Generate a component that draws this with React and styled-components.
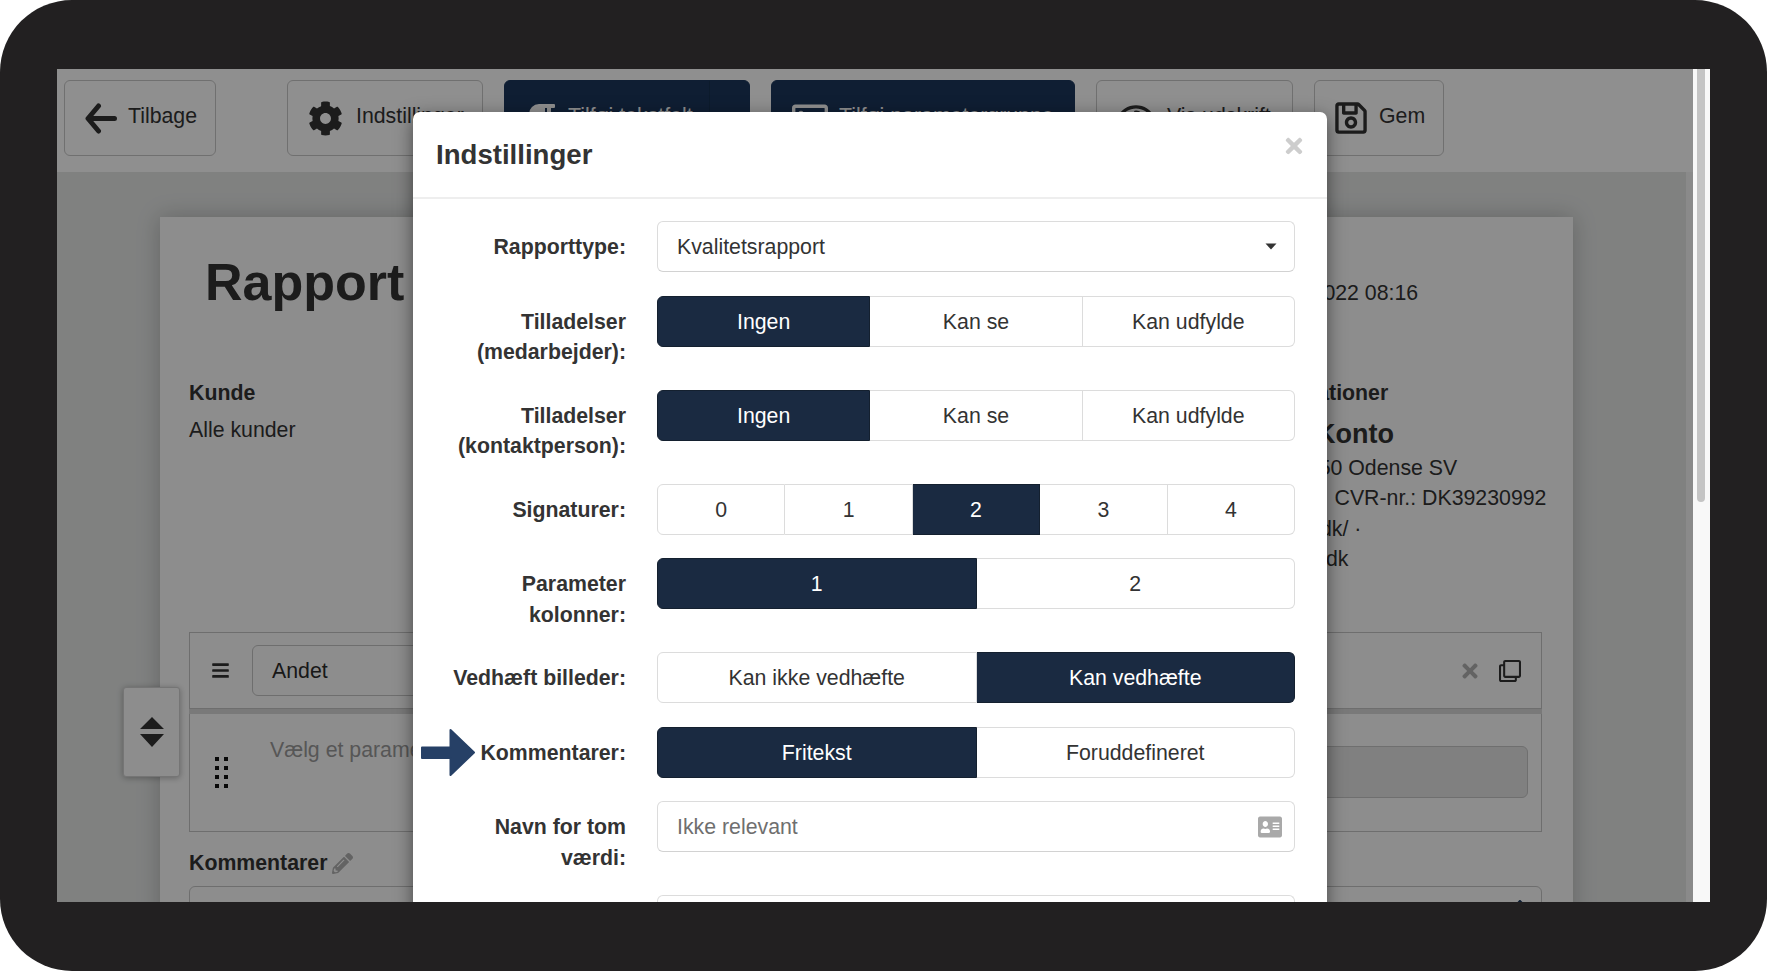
import React from 'react';
import styled, { createGlobalStyle } from 'styled-components';
import {
  FaCog, FaRegSave, FaRegEye, FaParagraph, FaRegImage, FaBars, FaTimes, FaRegClone,
  FaPencilAlt, FaAddressCard, FaEdit,
} from 'react-icons/fa';

const Global = createGlobalStyle`
  html, body { margin: 0; padding: 0; background: #fff; }
  body { font-family: "Liberation Sans", Arial, sans-serif; font-size: 21.3px; line-height: 30.5px; color: #333; }
  * { box-sizing: border-box; }
`;

const Frame = styled.div`
  width: 1767px;
  height: 971px;
  padding: 69px 57px;
  background: #222021;
  border-radius: 72px;
  overflow: hidden;
`;
const Screen = styled.div`
  position: relative;
  width: 1653px;
  height: 833px;
  display: flex;
  overflow: hidden;
  background: #fff;
`;
const Viewport = styled.div`
  position: relative;
  width: 1636px;
  height: 833px;
  overflow: hidden;
  background: #f6f6f6;
`;
const Gutter = styled.div`
  width: 17px;
  background: #f8f8f8;
  padding: 0 5px 0 4px;
`;
const Thumb = styled.div`
  height: 433px;
  background: #c4c4c4;
  border-radius: 0 0 4px 4px;
`;

const Toolbar = styled.div`
  height: 103px;
  padding: 11px 0 0 7px;
  display: flex;
  gap: 21px;
  align-items: flex-start;
  background: #fff;
`;
const ToolButton = styled.div`
  width: ${p => p.$width}px;
  height: 76px;
  margin-right: ${p => p.$after || 0}px;
  padding-left: ${p => p.$pad || 20}px;
  display: flex;
  align-items: center;
  gap: ${p => p.$gap || 11}px;
  border: 1px solid ${p => (p.$dark ? '#1b365b' : '#c8c8c8')};
  border-radius: 6px;
  background: ${p => (p.$dark ? '#1b365b' : '#fff')};
  color: ${p => (p.$dark ? '#fff' : '#333')};
  white-space: nowrap;
  overflow: hidden;
`;
const ToolLabel = styled.span`
  margin-bottom: 3px;
`;
const Split = styled.div`
  margin-left: auto;
  width: 40px;
  height: 100%;
  flex: none;
  border-left: 1px solid #16304f;
`;

const Main = styled.div`
  width: 1629px;
  height: 730px;
  padding: 45px 113px 0 103px;
  background: #e4e6e5;
`;
const Paper = styled.div`
  height: 800px;
  padding: 0 31px 0 29px;
  background: #fcfcfc;
  box-shadow: 0 0 22px rgba(0, 0, 0, 0.22);
`;
const InfoRow = styled.div`
  height: 357px;
  display: flex;
  justify-content: space-between;
`;
const LeftCol = styled.div`
  flex: 1;
`;
const RightCol = styled.div`
  width: 292px;
  padding-top: 61px;
`;
const Title = styled.h1`
  margin: 36px 0 67px 16px;
  font-size: 52px;
  line-height: 58px;
  font-weight: 700;
  color: #333;
`;
const Heading = styled.div`
  font-weight: 700;
  margin-left: ${p => p.$indent || 0}px;
`;
const Line = styled.div`
  margin-left: ${p => p.$indent || 0}px;
  margin-top: ${p => p.$top || 0}px;
  margin-bottom: ${p => p.$bottom || 0}px;
  white-space: nowrap;
`;
const CompanyName = styled.div`
  margin: 7px 0 1px 12px;
  font-size: 27px;
  line-height: 36px;
  font-weight: 700;
  white-space: nowrap;
`;

const Section = styled.div`
  margin-top: 58px;
`;
const SectionHeader = styled.div`
  height: 77px;
  padding: 0 20px 0 21px;
  display: flex;
  align-items: center;
  border: 1px solid #c4c4c4;
`;
const Separator = styled.div`
  height: 5px;
  background: #d8d8d8;
`;
const SectionBody = styled.div`
  height: 118px;
  display: flex;
  border: 1px solid #c4c4c4;
  border-top: 0;
`;
const NameField = styled.div`
  margin-left: 22px;
  width: 800px;
  height: 51px;
  padding: 2px 0 0 19px;
  display: flex;
  align-items: center;
  flex: none;
  border: 1px solid #c4c4c4;
  border-radius: 6px;
  color: #2c2c2c;
`;
const HeaderActions = styled.div`
  margin-left: auto;
  display: flex;
  align-items: center;
  gap: 18px;
`;
const Grip = styled.div`
  margin: 43px 0 0 25px;
  width: 13px;
  height: 31px;
  display: grid;
  grid-template-columns: 4px 4px;
  grid-auto-rows: 4px;
  justify-content: space-between;
  align-content: space-between;
  flex: none;
`;
const GripDot = styled.span`
  background: #111;
`;
const ParamPick = styled.div`
  margin: 21px 0 0 42px;
  width: 400px;
  flex: none;
  color: #9a9a9a;
`;
const ParamInput = styled.div`
  margin: 32px 13px 0 auto;
  width: 600px;
  height: 52px;
  background: #e4e4e4;
  border: 1px solid #c6c6c6;
  border-radius: 6px;
`;
const CommentHead = styled.div`
  margin: 16px 0 7.5px;
  display: flex;
  align-items: center;
  gap: 5px;
  font-weight: 700;
`;
const TextArea = styled.div`
  position: relative;
  height: 120px;
  border: 1px solid #c4c4c4;
  border-radius: 6px;
`;
const EditBadge = styled.div`
  position: absolute;
  top: 12px;
  right: 18px;
  color: #1b365b;
  line-height: 0;
`;

const SortWidget = styled.div`
  position: absolute;
  left: 66px;
  top: 618px;
  width: 57px;
  height: 90px;
  display: flex;
  align-items: center;
  justify-content: center;
  background: #fbfbfb;
  border: 1px solid #d0d0d0;
  border-radius: 3px;
  box-shadow: 0 1px 6px rgba(0, 0, 0, 0.3);
`;

const Backdrop = styled.div`
  position: absolute;
  inset: 0;
  background: rgba(0, 0, 0, 0.44);
`;
const Modal = styled.div`
  position: absolute;
  left: 356px;
  top: 43px;
  width: 914px;
  height: 900px;
  background: #fff;
  border-radius: 7px;
  box-shadow: 0 5px 18px rgba(0, 0, 0, 0.5);
`;
const ModalHeader = styled.div`
  height: 87px;
  padding: 20px 23px 0 23px;
  display: flex;
  justify-content: space-between;
  border-bottom: 2px solid #eeeeee;
`;
const ModalTitle = styled.h4`
  margin: 0;
  font-size: 27.6px;
  line-height: 45px;
  font-weight: 700;
  color: #333;
`;
const Close = styled.div`
  margin: 2px -2px 0 0;
  color: #cdcdcd;
  line-height: 0;
`;
const ModalBody = styled.div`
  padding: 22px 32px 0;
`;
const Row = styled.div`
  position: relative;
  display: grid;
  grid-template-columns: 181px 1fr;
  column-gap: 31px;
  margin-bottom: 23.5px;
  align-items: start;
`;
const Label = styled.div`
  padding-top: 11px;
  margin-bottom: -1.5px;
  text-align: right;
  font-weight: 700;
  color: #333;
`;
const Pointer = styled.svg`
  position: absolute;
  left: -24px;
  top: 2px;
`;
const Field = styled.div`
  height: 51px;
  padding: 2px 12px 0 19px;
  display: flex;
  align-items: center;
  justify-content: space-between;
  border: 1px solid #dcdcdc;
  border-bottom-color: #d2d2d2;
  border-radius: 6px;
  color: ${p => (p.$muted ? '#6f6f6f' : '#333')};
`;
const Caret = styled.svg`
  margin: -2px 5px 0 0;
`;
const CardIcon = styled(FaAddressCard)`
  width: 24px;
  height: 24px;
  margin-top: -2px;
  color: #a9a9a9;
`;
const Segments = styled.div`
  height: 51px;
  display: flex;
`;
const Segment = styled.div`
  flex: 1 1 0;
  padding-top: 2px;
  display: flex;
  align-items: center;
  justify-content: center;
  background: ${p => (p.$on ? '#1a2a41' : '#fff')};
  color: ${p => (p.$on ? '#fff' : '#333')};
  border: 1px solid ${p => (p.$on ? '#14202f' : '#dcdcdc')};
  border-left-width: 0;
  &:first-child { border-left-width: 1px; border-radius: 6px 0 0 6px; }
  &:last-child { border-radius: 0 6px 6px 0; }
`;

const Toggle = ({ items, on }) => (
  <Segments>
    {items.map((t, i) => <Segment key={t} $on={i === on}>{t}</Segment>)}
  </Segments>
);

const BackArrow = () => (
  <svg width="32" height="31" viewBox="0 0 32 31" fill="none" stroke="#333" strokeWidth="5" strokeLinecap="round" strokeLinejoin="round">
    <path d="M13.5 3 L3 15.5 L13.5 28 M4 15.5 H29.5" />
  </svg>
);

const perms = ['Ingen', 'Kan se', 'Kan udfylde'];

export default function App() {
  return (
    <>
      <Global />
      <Frame>
        <Screen>
          <Viewport>
            <Toolbar>
              <ToolButton $width={152} $after={50}><BackArrow /><ToolLabel>Tilbage</ToolLabel></ToolButton>
              <ToolButton $width={196} $gap={13}><FaCog size={35} /><ToolLabel>Indstillinger</ToolLabel></ToolButton>
              <ToolButton $dark $width={246}><FaParagraph size={32} /><ToolLabel>Tilføj tekstfelt</ToolLabel><Split /></ToolButton>
              <ToolButton $dark $width={304}><FaRegImage size={36} /><ToolLabel>Tilføj parametergruppe</ToolLabel></ToolButton>
              <ToolButton $width={197} $gap={12}><FaRegEye size={38} /><ToolLabel>Vis udskrift</ToolLabel></ToolButton>
              <ToolButton $width={130} $pad={18} $gap={10}><FaRegSave size={36} /><ToolLabel>Gem</ToolLabel></ToolButton>
            </Toolbar>
            <Main>
              <Paper>
                <InfoRow>
                  <LeftCol>
                    <Title>Rapport</Title>
                    <Heading>Kunde</Heading>
                    <Line $top={6.5}>Alle kunder</Line>
                  </LeftCol>
                  <RightCol>
                    <Line $bottom={69.5}>01-01-2022 08:16</Line>
                    <Heading $indent={1}>Informationer</Heading>
                    <CompanyName>Min Konto</CompanyName>
                    <Line $indent={45}>5250 Odense SV</Line>
                    <Line $indent={36}>DK · CVR-nr.: DK39230992</Line>
                    <Line $indent={12}>konto.dk/ ·</Line>
                    <Line $indent={18}>konto.dk</Line>
                  </RightCol>
                </InfoRow>
                <Section>
                  <SectionHeader>
                    <FaBars size={19} />
                    <NameField>Andet</NameField>
                    <HeaderActions>
                      <FaTimes size={22} color="#b0b0b0" />
                      <FaRegClone size={22} />
                    </HeaderActions>
                  </SectionHeader>
                  <Separator />
                  <SectionBody>
                    <Grip>{Array.from({ length: 8 }, (_, i) => <GripDot key={i} />)}</Grip>
                    <ParamPick>Vælg et parameter</ParamPick>
                    <ParamInput />
                  </SectionBody>
                </Section>
                <CommentHead>Kommentarer<FaPencilAlt size={21} color="#b0b0b0" /></CommentHead>
                <TextArea><EditBadge><FaEdit size={20} /></EditBadge></TextArea>
              </Paper>
            </Main>
            <SortWidget>
              <svg width="24" height="30" viewBox="0 0 24 30" fill="#333">
                <path d="M12 0 L24 12 H0 Z M0 17 H24 L12 30 Z" />
              </svg>
            </SortWidget>
            <Backdrop />
          </Viewport>
          <Gutter><Thumb /></Gutter>
          <Modal>
            <ModalHeader>
              <ModalTitle>Indstillinger</ModalTitle>
              <Close><FaTimes size={24} /></Close>
            </ModalHeader>
            <ModalBody>
              <Row>
                <Label>Rapporttype:</Label>
                <Field>
                  Kvalitetsrapport
                  <Caret width="12" height="7" viewBox="0 0 12 7" fill="#333"><path d="M0.5 0.5 H11.5 L6 6.5 Z" /></Caret>
                </Field>
              </Row>
              <Row><Label>Tilladelser (medarbejder):</Label><Toggle items={perms} on={0} /></Row>
              <Row><Label>Tilladelser (kontaktperson):</Label><Toggle items={perms} on={0} /></Row>
              <Row><Label>Signaturer:</Label><Toggle items={['0', '1', '2', '3', '4']} on={2} /></Row>
              <Row><Label>Parameter kolonner:</Label><Toggle items={['1', '2']} on={0} /></Row>
              <Row><Label>Vedhæft billeder:</Label><Toggle items={['Kan ikke vedhæfte', 'Kan vedhæfte']} on={1} /></Row>
              <Row>
                <Pointer width="54" height="47" viewBox="0 0 54 47" fill="#264066" stroke="#264066" strokeWidth="2" strokeLinejoin="round">
                  <path d="M1 18.5 H29.5 V1 L53 23.5 L29.5 46 V29 H1 Z" />
                </Pointer>
                <Label>Kommentarer:</Label>
                <Toggle items={['Fritekst', 'Foruddefineret']} on={0} />
              </Row>
              <Row>
                <Label>Navn for tom værdi:</Label>
                <Field $muted>Ikke relevant<CardIcon preserveAspectRatio="none" /></Field>
              </Row>
              <Row><Label /><Field /></Row>
            </ModalBody>
          </Modal>
        </Screen>
      </Frame>
    </>
  );
}
